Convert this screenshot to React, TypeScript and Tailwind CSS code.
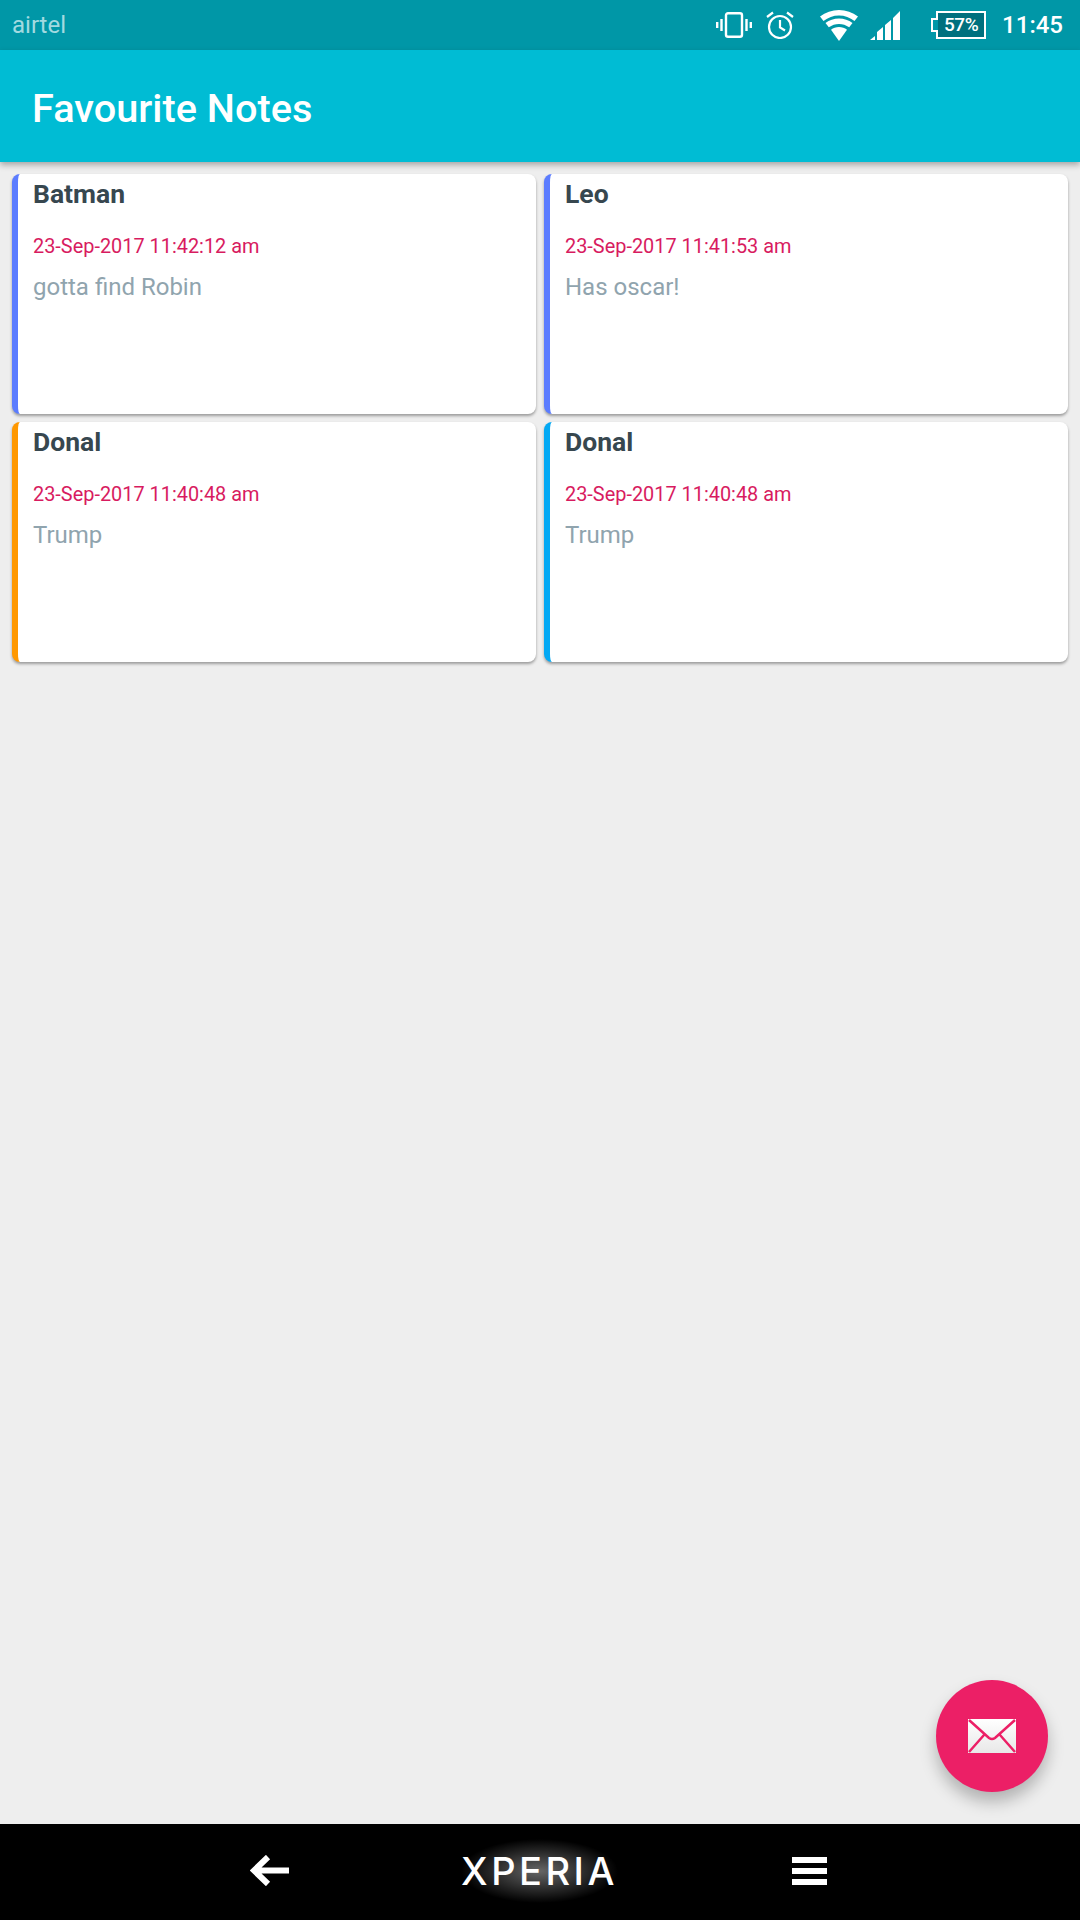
const notes = [
  { title: "Batman", date: "23-Sep-2017 11:42:12 am", body: "gotta find Robin", accent: "border-l-[#5B7CFF]" },
  { title: "Leo", date: "23-Sep-2017 11:41:53 am", body: "Has oscar!", accent: "border-l-[#5B7CFF]" },
  { title: "Donal", date: "23-Sep-2017 11:40:48 am", body: "Trump", accent: "border-l-[#FF9800]" },
  { title: "Donal", date: "23-Sep-2017 11:40:48 am", body: "Trump", accent: "border-l-[#03A9F4]" },
];

const StatusIcons = () => (
  <div className="flex items-center ml-auto">
    {/* vibrate */}
    <svg width="36" height="26" viewBox="0 0 36 26" fill="none" stroke="white">
      <rect x="10" y="1.200" width="16" height="23.600" rx="2" strokeWidth="2.400" />
      <path d="M5.500 7v12M1.200 10v6M30.500 7v12M34.800 10v6" strokeWidth="2.400" />
    </svg>
    {/* alarm */}
    <svg className="ml-[14px]" width="28" height="28" viewBox="0 0 28 28" fill="none" stroke="white" strokeWidth="2.200">
      <circle cx="14" cy="16" r="11" />
      <path d="M14 9v7.500l5 3M1 6l6-4.500M27 6l-6-4.500" />
    </svg>
    {/* wifi */}
    <svg className="ml-[26px]" width="38" height="31" viewBox="0 0 38 31" fill="white">
      <path d="M19 0C12 0 5.500 2.400 0 6.500l3.500 4.500C8 7.500 13.300 5.500 19 5.500s11 2 15.500 5.500L38 6.500C32.500 2.400 26 0 19 0z" />
      <path d="M19 8.500c-5 0-9.700 1.700-13.500 4.500l3.300 4.300C12 15.200 15.300 14 19 14s7 1.200 10.200 3.300l3.300-4.300C28.700 10.200 24 8.500 19 8.500z" />
      <path d="M19 17c-3 0-5.800 1-8 2.700L19 31l8-11.300C24.800 18 22 17 19 17z" />
    </svg>
    {/* signal */}
    <svg className="ml-3" width="30" height="30" viewBox="0 0 30 30" fill="white">
      <path d="M0 30l5-4v4zM7 30v-8l6-5v13zM15 30V15l6-5v20zM23 30V8l7-7v29z" />
    </svg>
    {/* battery */}
    <div className="relative ml-[31px] w-[55px] h-[28px] flex items-center justify-center pl-[5px] text-white text-[19px] font-medium tracking-tight">
      <svg className="absolute inset-0" width="55" height="28" viewBox="0 0 55 28">
        <path d="M6 1h48v26H6V20H1V8h5z" fill="#00707E" stroke="white" strokeWidth="2" />
        <path d="M2 9h5v10H2z" fill="#0097A7" />
      </svg>
      <span className="relative">57%</span>
    </div>
    <span className="ml-4 mr-[17px] text-white text-[24px] font-medium leading-none">11:45</span>
  </div>
);

const NoteCard = ({ title, date, body, accent }: (typeof notes)[number]) => (
  <div className={`h-[240px] rounded-lg bg-white border-l-[6px] pl-[15px] shadow-[0_2px_3px_rgba(0,0,0,0.35)] ${accent}`}>
    <h2 className="mt-[3px] text-[26.500px] leading-[34px] font-bold text-[#37474F]">{title}</h2>
    <p className="mt-[22px] text-[19.900px] leading-[28px] text-[#D81B60]">{date}</p>
    <p className="mt-[11px] text-[24px] leading-[30px] text-[#90A4AE]">{body}</p>
  </div>
);

export default function App() {
  return (
    <div className="w-[1080px] h-[1920px] flex flex-col bg-[#EEEEEE] font-['Roboto',sans-serif] overflow-hidden">
      <div className="h-[50px] shrink-0 flex items-center pl-3 bg-[#0097A7]">
        <span className="text-[24px] text-[#A3DAE0]">airtel</span>
        <StatusIcons />
      </div>

      <header className="h-[112px] shrink-0 flex items-center pl-[32px] pt-[6px] bg-[#00BCD4] shadow-[0_3px_6px_rgba(0,0,0,0.3)] z-10">
        <h1 className="text-[39.700px] font-medium text-white">Favourite Notes</h1>
      </header>

      <main className="relative flex-1 pt-3 px-3">
        <div className="grid grid-cols-2 gap-2">
          {notes.map((n, i) => (
            <NoteCard key={i} {...n} />
          ))}
        </div>

        <button className="absolute right-[32px] bottom-[32px] w-[112px] h-[112px] rounded-full bg-[#EC1F66] flex items-center justify-center shadow-[0_10px_16px_rgba(0,0,0,0.25)]">
          <svg width="48" height="34" viewBox="0 0 48 34">
            <defs>
              <linearGradient id="env" x1="0" y1="0" x2="0" y2="1">
                <stop offset="0" stopColor="#FFFFFF" />
                <stop offset="1" stopColor="#E8E8E8" />
              </linearGradient>
            </defs>
            <rect width="48" height="34" fill="url(#env)" />
            <path d="M1 1l20 18q3 2 6 0L47 1M1 33l15-17M47 33L32 16" fill="none" stroke="#EC1F66" strokeWidth="2.500" />
          </svg>
        </button>
      </main>

      <nav className="h-[96px] shrink-0 bg-black flex items-center pl-[250px] pb-[3px]">
        <svg width="39" height="31" viewBox="0 0 39 31" fill="none" stroke="white" strokeWidth="6">
          <path d="M39 15.500H5M18 2L4 15.500 18 29" />
        </svg>
        <span className="ml-[172px] w-[157px] h-[64px] flex items-center justify-center text-[38px] leading-none text-white font-['Inter',sans-serif] font-medium tracking-[3.500px] bg-[radial-gradient(ellipse_closest-side,rgba(255,255,255,0.4),transparent)]">
          XPERIA
        </span>
        <div className="ml-[174px] w-[35px] flex flex-col gap-[5px]">
          <div className="h-[6px] bg-white" />
          <div className="h-[6px] bg-white" />
          <div className="h-[6px] bg-white" />
        </div>
      </nav>
    </div>
  );
}
